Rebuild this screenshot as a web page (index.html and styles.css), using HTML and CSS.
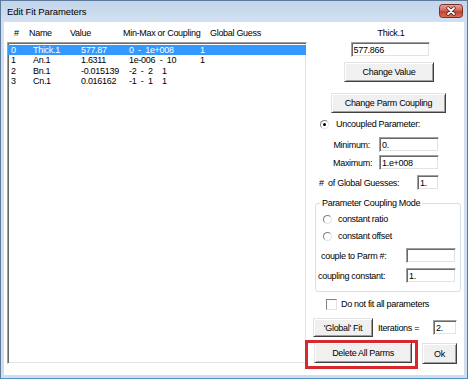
FILE: index.html
```html
<!DOCTYPE html>
<html lang="en">
<head>
  <meta charset="UTF-8">
  <title>Edit Fit Parameters</title>
  <link rel="stylesheet" href="styles.css">
</head>
<body>
  <div class="window">
    <div class="titlebar">
      <span class="title">Edit Fit Parameters</span>
      <span class="close">
        <svg width="24" height="14" viewBox="0 0 24 14">
          <defs>
            <linearGradient id="red" x1="0" y1="0" x2="0" y2="1">
              <stop offset="0" stop-color="#e9a99e"/>
              <stop offset="0.45" stop-color="#d0685a"/>
              <stop offset="0.55" stop-color="#c2422f"/>
              <stop offset="1" stop-color="#d9735f"/>
            </linearGradient>
          </defs>
          <rect x="0.5" y="0.5" width="23" height="13" rx="3" fill="url(#red)" stroke="#7d2f25"/>
          <path d="M9 4 L15 10 M15 4 L9 10" stroke="#5a1d15" stroke-width="3.4" stroke-linecap="round"/>
          <path d="M9 4 L15 10 M15 4 L9 10" stroke="#fff" stroke-width="1.8" stroke-linecap="round"/>
        </svg>
      </span>
    </div>

    <div class="client">
      <div class="left">
        <div class="list-head">
          <span>#</span><span>Name</span><span>Value</span><span>Min-Max or Coupling</span><span>Global Guess</span>
        </div>
        <div class="listbox">
          <div class="row sel"><span>0</span><span>Thick.1</span><span>577.87</span><span>0  -  1e+008</span><span>1</span></div>
          <div class="row"><span>1</span><span>An.1</span><span>1.6311</span><span>1e-006  -  10</span><span>1</span></div>
          <div class="row"><span>2</span><span>Bn.1</span><span>-0.015139</span><span class="wide"><span class="mm">-2  -  2</span>1</span></div>
          <div class="row"><span>3</span><span>Cn.1</span><span>0.016162</span><span class="wide"><span class="mm">-1  -  1</span>1</span></div>
        </div>
      </div>

      <div class="right">
        <div class="top-block">
          <div class="parm-name">Thick.1</div>
          <input class="edit value-edit" value="577.866">
          <button class="btn change-value">Change Value</button>
        </div>
        <button class="btn parm-coupling">Change Parm Coupling</button>

        <div class="opt uncoupled"><span class="radio on"></span>Uncoupled Parameter:</div>
        <div class="field min-row"><label>Minimum:</label><input class="edit w60" value="0."></div>
        <div class="field max-row"><label>Maximum:</label><input class="edit w60" value="1.e+008"></div>
        <div class="field guess-row"><label>#  of Global Guesses:</label><input class="edit w22" value="1."></div>

        <fieldset class="group">
          <legend>Parameter Coupling Mode</legend>
          <div class="opt ratio"><span class="radio"></span>constant ratio</div>
          <div class="opt offset"><span class="radio"></span>constant offset</div>
          <div class="field couple-row"><label>couple to Parm #:</label><input class="edit w50" value=""></div>
          <div class="field const-row"><label>coupling constant:</label><input class="edit w50" value="1."></div>
        </fieldset>

        <div class="opt check-row"><span class="check"></span>Do not fit all parameters</div>

        <div class="global-row">
          <button class="btn global-fit">'Global' Fit</button>
          <span class="iter-label">Iterations =</span>
          <input class="edit w24" value="2.">
        </div>

        <div class="bottom-row">
          <button class="btn delete-all">Delete All Parms</button>
          <button class="btn ok">Ok</button>
        </div>
      </div>
    </div>
  </div>
</body>
</html>
```

FILE: styles.css
```css
body {
  margin: 0;
  font-family: "Liberation Sans", Arial, sans-serif;
  font-size: 9px;
  letter-spacing: -0.3px;
  color: #000;
}

.window {
  width: 468px;
  height: 379px;
  box-sizing: border-box;
  border: 1px solid #5f7b9c;
  border-bottom-color: #4f93c4;
  padding: 0 3px 3px;
  background: linear-gradient(#c3d5eb, #d2e0f1 21px, #cfdff1);
  display: flex;
  flex-direction: column;
}

.titlebar {
  height: 21px;
  flex: none;
  display: flex;
  justify-content: space-between;
  align-items: flex-start;
}
.title {
  font-size: 9.5px;
  letter-spacing: -0.1px;
  margin: 5px 0 0 3px;
}
.close { margin: 3px 1px 0 0; height: 14px; }
.close svg { display: block; }

.client {
  flex: 1;
  background: #fff;
  display: flex;
}

/* list of parameters */
.left { width: 303px; flex: none; }
.list-head {
  display: grid;
  grid-template-columns: 15px 41px 53px 87px auto;
  padding: 5px 0 0 10px;
  height: 12px;
  line-height: 12px;
  white-space: nowrap;
}
.listbox {
  margin: 3px 0 0 3px;
  width: 300px;
  height: 322px;
  box-sizing: border-box;
  border: 1px solid;
  border-color: #a0a0a0 #fff #fff #a0a0a0;
  box-shadow: inset 1px 1px 0 #696969, inset -1px -1px 0 #e3e3e3;
  padding-top: 2px;
}
.row {
  display: grid;
  grid-template-columns: 22px 48px 48px 71px auto;
  height: 10.4px;
  line-height: 10.4px;
  padding-left: 3px;
  white-space: pre;
}
.row.sel { background: #3399ff; color: #fff; }
.row .wide { grid-column: span 2; }
.row .mm { display: inline-block; width: 33px; }

/* right hand controls */
.right {
  flex: 1;
  display: flex;
  flex-direction: column;
  align-items: flex-start;
}

.edit {
  box-sizing: border-box;
  height: 15px;
  margin: 0;
  padding: 0 2px;
  font: inherit;
  letter-spacing: inherit;
  color: #000;
  background: #fff;
  border: 1px solid;
  border-color: #a0a0a0 #fff #fff #a0a0a0;
  box-shadow: inset 1px 1px 0 #696969, inset -1px -1px 0 #e3e3e3;
  outline: none;
}
.w60 { width: 60px; }
.w50 { width: 50px; }
.w24 { width: 24px; }
.w22 { width: 22px; }

.btn {
  box-sizing: border-box;
  height: 20px;
  margin: 0;
  padding: 0;
  font: inherit;
  letter-spacing: inherit;
  color: #000;
  background: #f0f0f0;
  border: 1px solid;
  border-color: #e3e3e3 #404040 #404040 #e3e3e3;
  box-shadow: inset 1px 1px 0 #fff, inset -1px -1px 0 #a0a0a0;
}

.top-block {
  margin: 5px 0 0 24px;
  width: 116px;
  display: flex;
  flex-direction: column;
  align-items: center;
}
.parm-name { height: 12px; line-height: 12px; padding-left: 4px; }
.value-edit { width: 79px; margin-top: 3px; margin-left: 2px; }
.change-value { width: 90px; margin-top: 5px; }
.parm-coupling { width: 115px; margin: 11px 0 0 24px; }

.opt {
  display: flex;
  align-items: center;
  height: 12px;
  line-height: 12px;
}
.radio {
  width: 9px;
  height: 9px;
  box-sizing: border-box;
  border-radius: 50%;
  border: 1px solid;
  border-color: #808080 #e3e3e3 #e3e3e3 #808080;
  background: #fff;
  display: flex;
  align-items: center;
  justify-content: center;
}
.radio.on::after {
  content: "";
  width: 3px;
  height: 3px;
  border-radius: 50%;
  background: #000;
}
.uncoupled { margin: 5px 0 0 13px; gap: 7px; }

.field { display: flex; align-items: center; }
.field label { white-space: pre; }
.min-row { margin: 7px 0 0 26px; }
.max-row { margin: 3px 0 0 26px; }
.min-row label, .max-row label { width: 37px; margin-right: 9px; text-align: right; }
.guess-row { margin: 5px 0 0 12px; }
.guess-row label { width: 98px; }

.group {
  margin: 7px 0 0 8px;
  width: 146px;
  box-sizing: border-box;
  padding: 0 0 8px;
  border: 1px solid #d5dfe5;
  border-radius: 3px;
}
.group legend {
  margin-left: 4px;
  padding: 0 2px;
  height: 12px;
  line-height: 12px;
}
.ratio { margin: 4px 0 0 7px; gap: 6px; }
.offset { margin: 5px 0 0 7px; gap: 6px; }
.couple-row { margin: 6px 0 0 5px; }
.couple-row label { width: 85px; }
.const-row { margin: 5px 0 0 2px; }
.const-row label { width: 88px; }

.check-row { margin: 6px 0 0 19px; gap: 4px; }
.check {
  width: 11px;
  height: 11px;
  box-sizing: border-box;
  border: 1px solid;
  border-color: #808080 #e3e3e3 #e3e3e3 #808080;
  background: #fff;
}

.global-row {
  margin: 8px 0 0 6px;
  display: flex;
  align-items: center;
}
.global-fit { width: 60px; height: 19px; }
.iter-label { width: 55px; margin-left: 5px; }

.bottom-row {
  margin: 5px 0 0 7px;
  display: flex;
  align-items: flex-start;
}
.delete-all { width: 98px; height: 21px; position: relative; }
.delete-all::after {
  content: "";
  position: absolute;
  left: -10px;
  top: -3px;
  right: -7px;
  bottom: -7px;
  border: 3px solid #d8282e;
}
.ok { width: 35px; height: 21px; margin: 1px 0 0 10px; }
```
